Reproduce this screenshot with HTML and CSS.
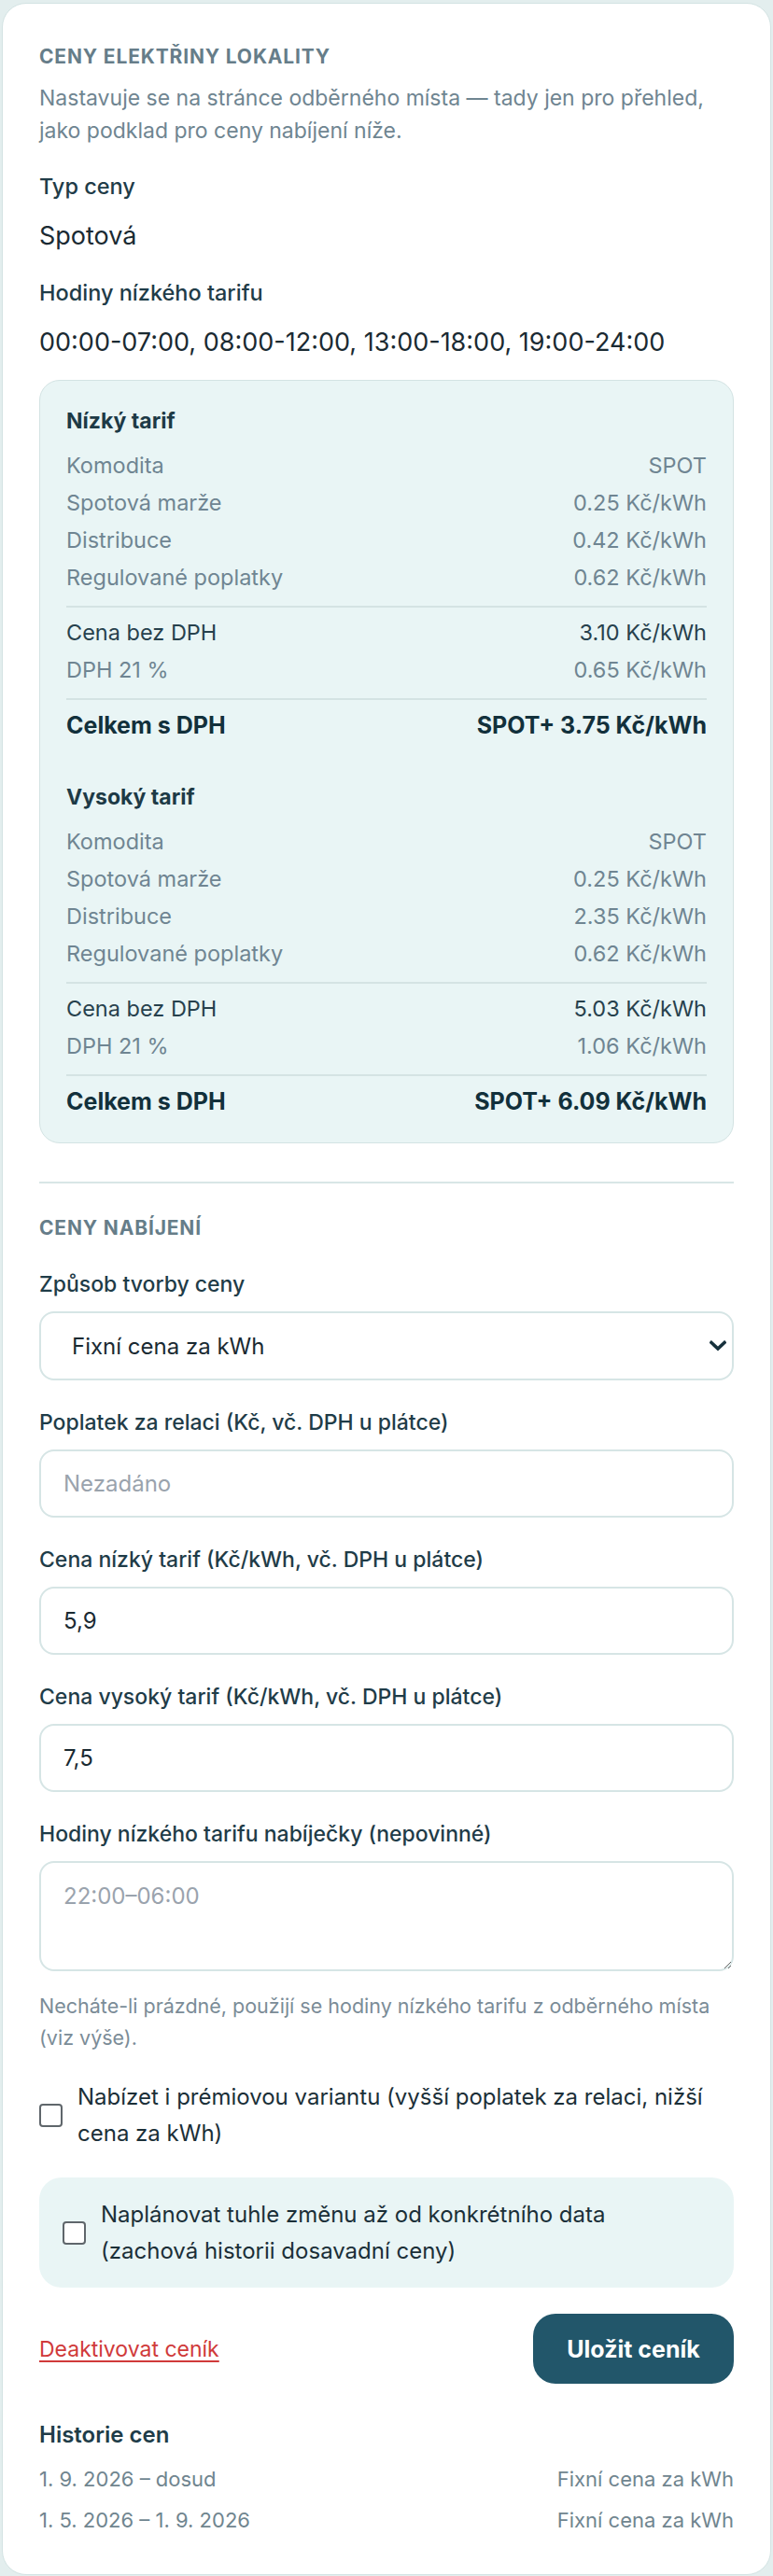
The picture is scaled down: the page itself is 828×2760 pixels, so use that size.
FILE: index.html
```html
<!DOCTYPE html>
<html lang="cs">
<head>
<meta charset="utf-8">
<title>Ceník</title>
<link rel="stylesheet" href="styles.css">
</head>
<body>
<div class="card">
  <h2 class="section-title">Ceny elektřiny lokality</h2>
  <p class="desc">Nastavuje se na stránce odběrného místa — tady jen pro přehled, jako podklad pro ceny nabíjení níže.</p>

  <div class="info">
    <div class="info-label">Typ ceny</div>
    <div class="info-value">Spotová</div>
  </div>
  <div class="info">
    <div class="info-label">Hodiny nízkého tarifu</div>
    <div class="info-value">00:00-07:00, 08:00-12:00, 13:00-18:00, 19:00-24:00</div>
  </div>

  <div class="tariffs">
    <div class="tariff">
      <div class="tariff-title">Nízký tarif</div>
      <div class="row"><span>Komodita</span><span>SPOT</span></div>
      <div class="row"><span>Spotová marže</span><span>0.25 Kč/kWh</span></div>
      <div class="row"><span>Distribuce</span><span>0.42 Kč/kWh</span></div>
      <div class="row"><span>Regulované poplatky</span><span>0.62 Kč/kWh</span></div>
      <div class="sep"></div>
      <div class="row strong"><span>Cena bez DPH</span><span>3.10 Kč/kWh</span></div>
      <div class="row"><span>DPH 21 %</span><span>0.65 Kč/kWh</span></div>
      <div class="sep"></div>
      <div class="row total"><span>Celkem s DPH</span><span>SPOT+ 3.75 Kč/kWh</span></div>
    </div>
    <div class="tariff">
      <div class="tariff-title">Vysoký tarif</div>
      <div class="row"><span>Komodita</span><span>SPOT</span></div>
      <div class="row"><span>Spotová marže</span><span>0.25 Kč/kWh</span></div>
      <div class="row"><span>Distribuce</span><span>2.35 Kč/kWh</span></div>
      <div class="row"><span>Regulované poplatky</span><span>0.62 Kč/kWh</span></div>
      <div class="sep"></div>
      <div class="row strong"><span>Cena bez DPH</span><span>5.03 Kč/kWh</span></div>
      <div class="row"><span>DPH 21 %</span><span>1.06 Kč/kWh</span></div>
      <div class="sep"></div>
      <div class="row total"><span>Celkem s DPH</span><span>SPOT+ 6.09 Kč/kWh</span></div>
    </div>
  </div>

  <hr class="divider">

  <h2 class="section-title second">Ceny nabíjení</h2>

  <div class="field first">
    <label class="field-label" for="mode">Způsob tvorby ceny</label>
    <div class="select-wrap">
      <select id="mode" class="control select">
        <option>Fixní cena za kWh</option>
      </select>
      <svg class="chevron" viewBox="0 0 18 12" width="18" height="12" aria-hidden="true"><path d="M2 2.5 L9 9 L16 2.5" fill="none" stroke="#16313c" stroke-width="3.6" stroke-linecap="square"/></svg>
    </div>
  </div>

  <div class="field">
    <label class="field-label" for="fee">Poplatek za relaci (Kč, vč. DPH u plátce)</label>
    <input id="fee" class="control" type="text" placeholder="Nezadáno">
  </div>

  <div class="field">
    <label class="field-label" for="low">Cena nízký tarif (Kč/kWh, vč. DPH u plátce)</label>
    <input id="low" class="control" type="text" value="5,9">
  </div>

  <div class="field">
    <label class="field-label" for="high">Cena vysoký tarif (Kč/kWh, vč. DPH u plátce)</label>
    <input id="high" class="control" type="text" value="7,5">
  </div>

  <div class="field">
    <label class="field-label" for="hours">Hodiny nízkého tarifu nabíječky (nepovinné)</label>
    <textarea id="hours" class="control area" placeholder="22:00–06:00"></textarea>
  </div>

  <p class="hint">Necháte-li prázdné, použijí se hodiny nízkého tarifu z odběrného místa (viz výše).</p>

  <label class="check">
    <input type="checkbox" class="box">
    <span>Nabízet i prémiovou variantu (vyšší poplatek za relaci, nižší cena za kWh)</span>
  </label>

  <label class="check schedule">
    <input type="checkbox" class="box">
    <span>Naplánovat tuhle změnu až od konkrétního data (zachová historii dosavadní ceny)</span>
  </label>

  <div class="actions">
    <a class="danger" href="#">Deaktivovat ceník</a>
    <button class="primary" type="button">Uložit ceník</button>
  </div>

  <div class="history">
    <div class="history-title">Historie cen</div>
    <div class="hrow"><span>1. 9. 2026 – dosud</span><span>Fixní cena za kWh</span></div>
    <div class="hrow"><span>1. 5. 2026 – 1. 9. 2026</span><span>Fixní cena za kWh</span></div>
  </div>
</div>
</body>
</html>
```

FILE: styles.css
```css
* { box-sizing: border-box; }

html, body {
  margin: 0;
  background: #e3eeee;
}

body {
  padding: 3px 2px 3px 2px;
  font-family: "Inter", "Noto Sans", sans-serif;
  color: #1c3440;
}

.card {
  background: #ffffff;
  border: 1px solid #d3e3e3;
  border-radius: 26px;
  padding: 43px 39px 36px 39px;
}

.section-title {
  margin: 0;
  font-size: 21px;
  line-height: 28px;
  font-weight: 700;
  letter-spacing: 0.04em;
  text-transform: uppercase;
  color: #667d89;
}

.section-title.second { margin-top: 34px; }

.desc {
  margin: 13px 0 0;
  font-size: 23px;
  line-height: 35px;
  color: #6f8591;
}

.info { margin-top: 27px; }
.info + .info { margin-top: 28px; }

.info-label {
  font-size: 23.5px;
  line-height: 30px;
  font-weight: 500;
  color: #1f3c48;
}

.info-value {
  margin-top: 20px;
  font-size: 27px;
  line-height: 36px;
  color: #1a2a32;
}

.tariffs {
  margin-top: 22px;
  background: #e9f5f5;
  border: 1px solid #d3e3e3;
  border-radius: 22px;
  padding: 28px 28px 26px 28px;
  display: flex;
  flex-direction: column;
  gap: 44px;
}

.tariff-title {
  font-size: 23px;
  line-height: 30px;
  font-weight: 700;
  color: #1d3a46;
  margin-bottom: 13px;
}

.row {
  display: flex;
  justify-content: space-between;
  font-size: 23.5px;
  line-height: 40px;
  color: #6f8592;
}

.row.strong { color: #27414d; }

.row.total {
  font-size: 25px;
  line-height: 36px;
  font-weight: 700;
  color: #12303b;
}

.sep {
  height: 2px;
  background: #d4e3e3;
  margin: 10px 0 7px;
}

.sep + .row.total { margin-top: 9px; }

.divider {
  margin: 41px 0 0;
  border: 0;
  height: 2px;
  background: #d8e6e6;
}

.field { margin-top: 30px; }
.field.first { margin-top: 31px; }

.field-label {
  display: block;
  font-size: 23px;
  line-height: 30px;
  font-weight: 500;
  color: #1f3c48;
  margin-bottom: 14px;
}

.control {
  display: block;
  width: 100%;
  height: 73px;
  border: 2px solid #d6e5e5;
  border-radius: 16px;
  background: #ffffff;
  padding: 0 24px;
  font-family: inherit;
  font-size: 24px;
  color: #1a2a32;
  outline: none;
}

.control::placeholder { color: #9aa3ad; }

.select-wrap { position: relative; }

.select {
  appearance: none;
  -webkit-appearance: none;
  padding: 0 60px 0 33px;
  height: 74px;
}

.chevron {
  position: absolute;
  right: 8px;
  top: 31px;
}

.area {
  height: 118px;
  padding: 18px 24px;
  line-height: 36px;
  resize: vertical;
}

.hint {
  margin: 20px 0 0;
  font-size: 21.5px;
  line-height: 34px;
  color: #7b8c97;
}

.check {
  display: flex;
  align-items: center;
  gap: 16px;
  margin-top: 27px;
  font-size: 24px;
  line-height: 39px;
  color: #1b2f38;
}

.box {
  appearance: none;
  -webkit-appearance: none;
  flex: none;
  width: 25px;
  height: 25px;
  margin: 0;
  border: 2px solid #5f666b;
  border-radius: 4px;
  background: #ffffff;
}

.check.schedule {
  margin-top: 28px;
  background: #e9f5f5;
  border-radius: 24px;
  padding: 20px 34px 20px 25px;
}

.actions {
  margin-top: 28px;
  display: flex;
  justify-content: space-between;
  align-items: center;
}

.danger {
  font-size: 23px;
  color: #d03a3a;
  text-decoration: underline;
  text-decoration-thickness: 2px;
  text-underline-offset: 4px;
}

.primary {
  width: 215px;
  height: 75px;
  border: 0;
  border-radius: 24px;
  background: #22566a;
  color: #ffffff;
  font-family: inherit;
  font-size: 25px;
  font-weight: 700;
}

.history { margin-top: 40px; }

.history-title {
  font-size: 24px;
  line-height: 30px;
  font-weight: 600;
  color: #203c48;
  margin-bottom: 10px;
}

.hrow {
  display: flex;
  justify-content: space-between;
  font-size: 22px;
  line-height: 44px;
  color: #70858f;
}
```
